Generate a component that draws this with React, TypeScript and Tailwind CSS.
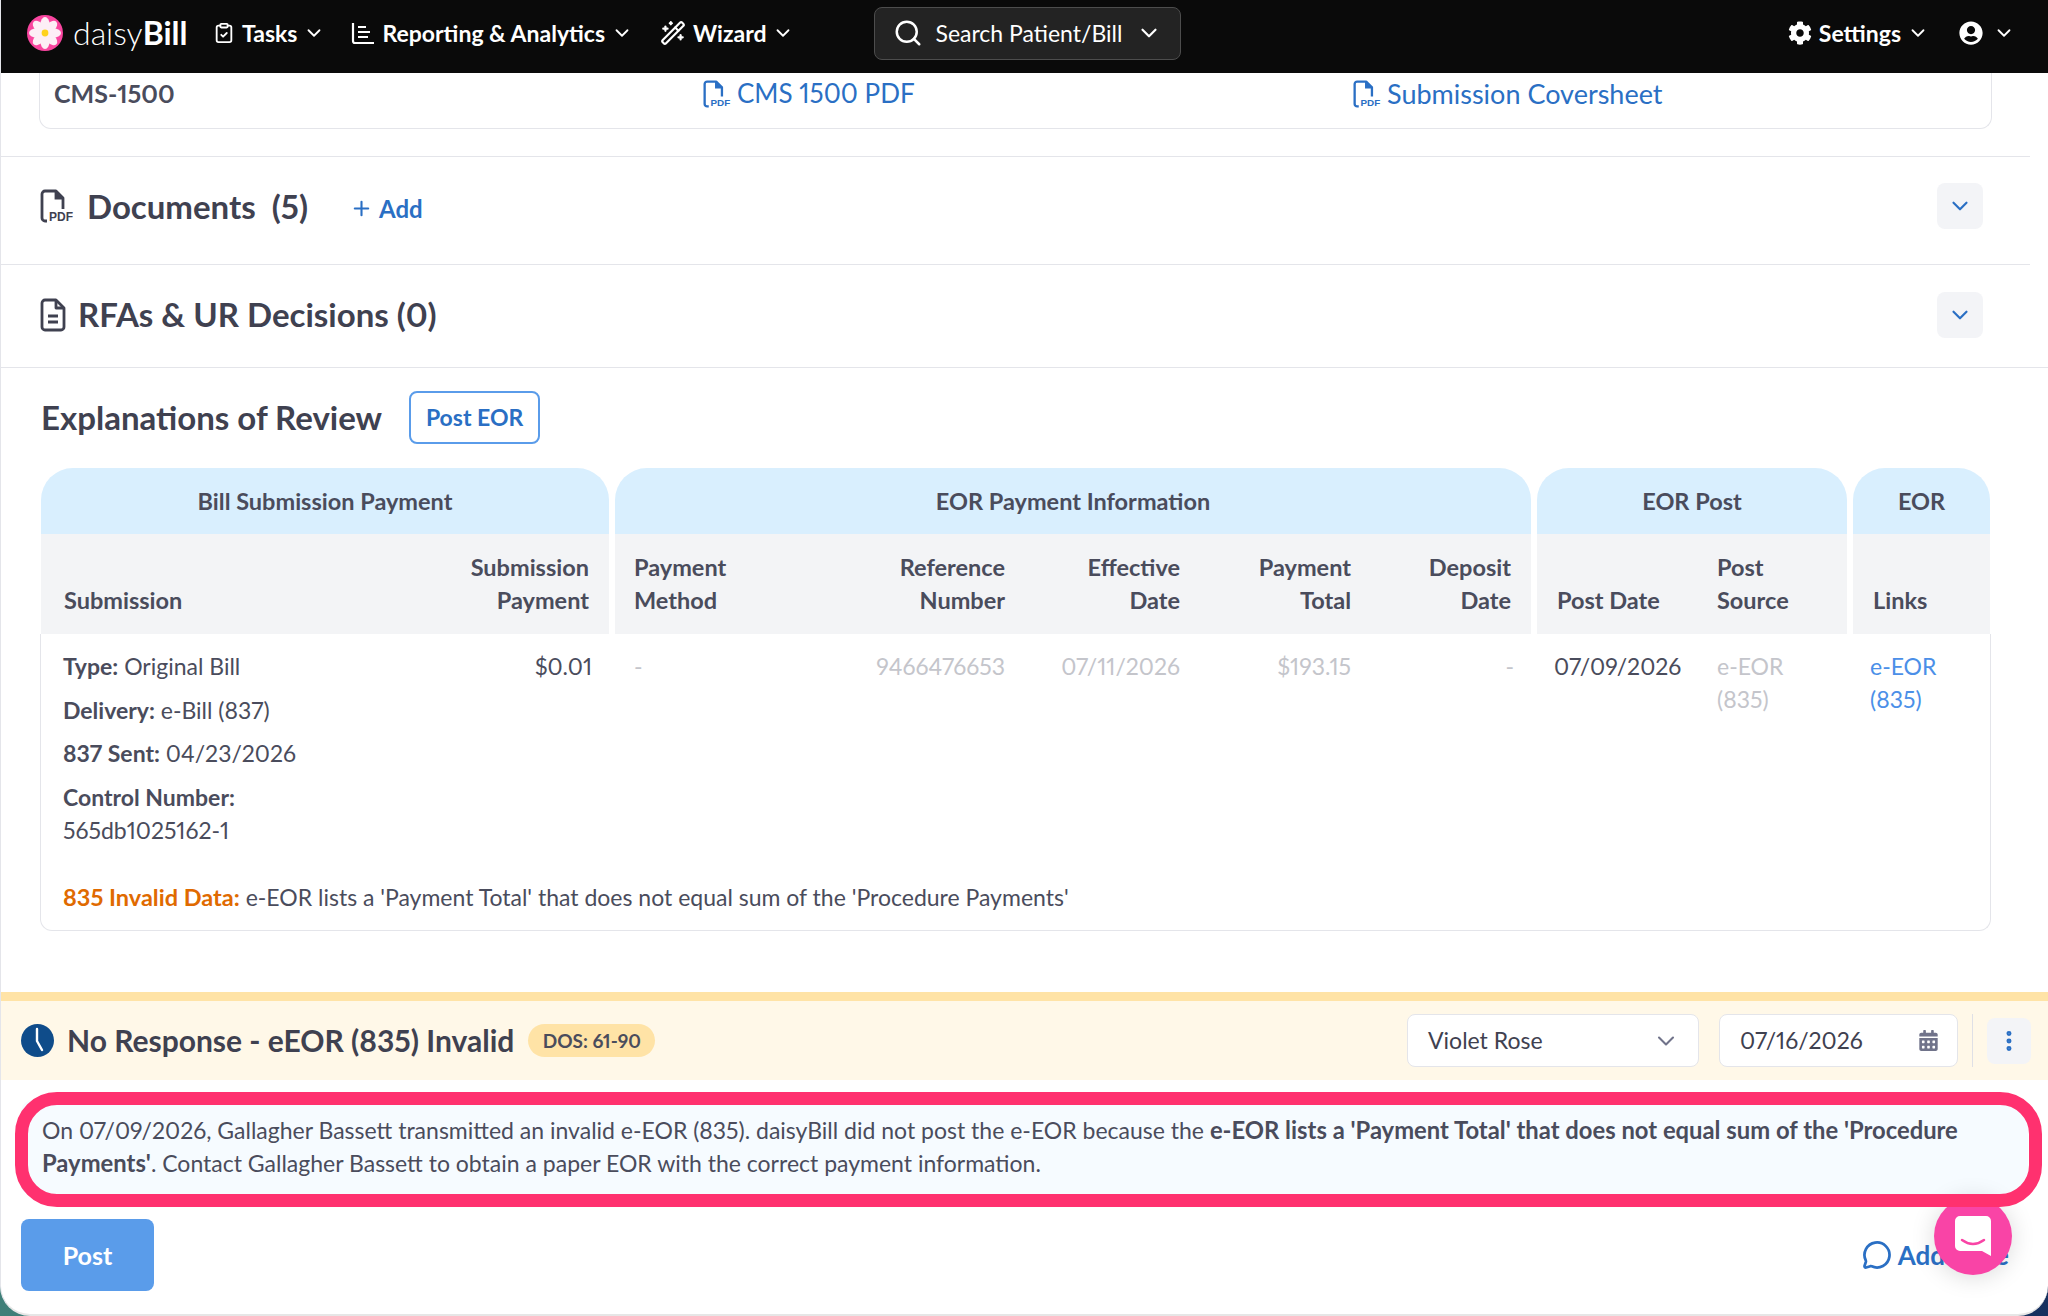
import React from "react";
import { ChevronDown, Search, ClipboardCheck, WandSparkles, Plus, MessageCircle, EllipsisVertical } from "lucide-react";
import { FaCog, FaUserCircle, FaCalendarAlt } from "react-icons/fa";

const Logo = () => (
  <svg width="36" height="36" viewBox="0 0 36 36">
    <circle cx="18" cy="18" r="18" fill="#f9459f" />
    {[0, 45, 90, 135, 180, 225, 270, 315].map((a) => (
      <ellipse key={a} cx="18" cy="9.5" rx="4.6" ry="7.5" fill="#fdeef6" transform={`rotate(${a} 18 18)`} />
    ))}
    <circle cx="18" cy="18" r="3.4" fill="#ffd21f" />
  </svg>
);

const PdfIcon = ({ color, size = 34 }: { color: string; size?: number }) => (
  <svg width={size} height={size} viewBox="0 0 34 34" fill="none" className="shrink-0">
    <path d="M7 32H5a3 3 0 0 1-3-3V5a3 3 0 0 1 3-3h11l7 7v11" stroke={color} strokeWidth="2.8" strokeLinejoin="round" />
    <path d="M16 2v7h7" stroke={color} strokeWidth="2.8" fill={color} />
    <text x="9" y="32" fontSize="12" fontWeight="700" fill={color} fontFamily="Liberation Sans, sans-serif" textLength="24" lengthAdjust="spacingAndGlyphs">PDF</text>
  </svg>
);

const DocIcon = () => (
  <svg width="26" height="34" viewBox="0 0 26 34" fill="none" stroke="#3f4150" strokeWidth="2.8" strokeLinejoin="round">
    <path d="M5 2h11l8 8v19a3 3 0 0 1-3 3H5a3 3 0 0 1-3-3V5a3 3 0 0 1 3-3z" />
    <path d="M16 2v8h8" />
    <path d="M8 18h10M8 24h10" />
  </svg>
);

const ReportIcon = () => (
  <svg width="24" height="24" viewBox="0 0 24 24" fill="none" stroke="#fff" strokeWidth="2.2">
    <path d="M2 2v18a2 2 0 0 0 2 2h19" />
    <path d="M7 6h8M7 11h12M7 16h10" />
  </svg>
);

const ClockIcon = () => (
  <svg width="33" height="33" viewBox="0 0 33 33">
    <circle cx="16.5" cy="16.5" r="16.5" fill="#0f4c8a" />
    <path d="M16 5v12l5 9" stroke="#fff" strokeWidth="2.4" fill="none" strokeLinecap="round" />
  </svg>
);

const NavItem = ({ icon, label, className }: { icon: React.ReactNode; label: string; className: string }) => (
  <div className={`flex items-center ${className}`}>
    {icon}
    <span className="ml-[7px] text-[23px] font-bold text-white">{label}</span>
    <ChevronDown size={22} strokeWidth={2} className="ml-[6px] text-white" />
  </div>
);

const Chevron = () => (
  <div className="w-[46px] h-[46px] rounded-lg bg-[#f3f4f7] flex items-center justify-center">
    <ChevronDown size={26} strokeWidth={2} className="text-[#2a6fc4]" />
  </div>
);

const g1 = "grid grid-cols-[358px_210px] w-[568px]";
const g2 = "grid grid-cols-[210px_200px_175px_171px_160px] w-[916px]";
const g3 = "grid grid-cols-[160px_150px] w-[310px]";
const g4 = "grid grid-cols-[137px] w-[137px]";

const Group = ({ label, w }: { label: string; w: string }) => (
  <div className={`${w} h-[66px] rounded-t-[32px] bg-[#d9effe] flex items-center justify-center text-[23.5px] font-bold text-[#4a4c5c]`}>
    {label}
  </div>
);

const Sub = ({ children, right }: { children: React.ReactNode; right?: boolean }) => (
  <div className={`h-[100px] flex items-end pb-[17px] px-5 leading-[33px] text-[23.5px] font-bold text-[#4a4c5c] ${right ? "justify-end text-right" : ""}`}>
    <span>{children}</span>
  </div>
);

const Kv = ({ k, v }: { k: string; v: string }) => (
  <p className="mb-[10.5px]"><b className="font-bold">{k}</b> {v}</p>
);

export default function App() {
  return (
    <div className="relative w-[2048px] h-[1316px] overflow-hidden bg-[linear-gradient(90deg,#3f7f78,#16305f)] text-[23px] leading-[33px] text-[#4a4c5c] proportional-nums font-['Lato','Liberation_Sans',sans-serif]">
      <div className="h-[1316px] bg-white rounded-b-[30px] border-l border-b-2 border-l-[#e4e5ea] border-b-[#e6e6e6] overflow-hidden">
        <header className="h-[73px] bg-[#0a0a0a] flex items-center pl-[26px] pr-[33px] pb-[7px]">
          <Logo />
          <div className="ml-[10px] text-[32px] leading-none text-white font-light w-[124px]">daisy<b className="font-bold">Bill</b></div>
          <NavItem className="ml-[16px]" icon={<ClipboardCheck size={22} strokeWidth={2} className="text-white" />} label="Tasks" />
          <NavItem className="ml-[26px]" icon={<ReportIcon />} label="Reporting & Analytics" />
          <NavItem className="ml-[27px]" icon={<WandSparkles size={26} strokeWidth={2} className="text-white" />} label="Wizard" />
          <div className="ml-[80px] w-[307px] h-[53px] rounded-lg border border-[#4d4d4d] bg-[#232323] flex items-center pl-[18px] pr-[18px]">
            <Search size={30} strokeWidth={2} className="text-white" />
            <span className="ml-[12px] text-white flex-1">Search Patient/Bill</span>
            <ChevronDown size={26} className="text-white" />
          </div>
          <div className="ml-auto flex items-center">
            <FaCog size={24} className="text-white" />
            <span className="ml-[7px] font-bold text-white">Settings</span>
            <ChevronDown size={22} className="ml-[6px] text-white" />
            <FaUserCircle size={24} className="ml-[30px] text-white" />
            <ChevronDown size={22} className="ml-[10px] text-white" />
          </div>
        </header>

        <div className="h-[56px] ml-[38px] w-[1953px] border border-t-0 border-[#e4e5ea] rounded-b-xl flex items-start pt-[4px] text-[#2a6fc4] text-[26px]">
          <span className="ml-[14px] w-[649px] text-[25px] font-bold text-[#4a4c5c]">CMS-1500</span>
          <a className="w-[650px] flex items-center gap-[6px]"><PdfIcon color="#2a6fc4" size={28} />CMS 1500 PDF</a>
          <a className="flex items-center gap-[6px] text-[27px]"><PdfIcon color="#2a6fc4" size={28} />Submission Coversheet</a>
        </div>

        <section className="mt-[27px] mr-[18px] h-[108px] border-t border-[#e4e5ea] flex items-center pb-[9px] pl-[39px] pr-[47px]">
          <PdfIcon color="#3f4150" size={34} />
          <h2 className="ml-[13px] text-[33px] font-bold text-[#3f4150]">Documents&nbsp; (5)</h2>
          <Plus size={23} strokeWidth={2.2} className="ml-[42px] mt-1 text-[#2a6fc4]" />
          <span className="ml-[6px] mt-1 font-bold text-[#2a6fc4] text-[24px]">Add</span>
          <div className="ml-auto"><Chevron /></div>
        </section>
        <section className="mr-[18px] h-[103px] border-t border-[#e4e5ea] flex items-center pb-[3px] pl-[39px] pr-[47px]">
          <DocIcon />
          <h2 className="ml-[12px] text-[33px] font-bold text-[#3f4150]">RFAs & UR Decisions (0)</h2>
          <div className="ml-auto"><Chevron /></div>
        </section>

        <div className="border-t border-[#e4e5ea] pl-[40px] pt-[23px]">
          <div className="flex items-center h-[53px]">
            <h2 className="text-[33px] font-bold text-[#3f4150]">Explanations of Review</h2>
            <button className="ml-[27px] w-[131px] h-[53px] rounded-lg border-2 border-[#5a9cea] text-[#2a6fc4] font-bold text-[23px]">Post EOR</button>
          </div>

          <div className="mt-[24px] w-[1950px]">
            <div className="flex gap-[6px]">
              <Group w="w-[568px]" label="Bill Submission Payment" />
              <Group w="w-[916px]" label="EOR Payment Information" />
              <Group w="w-[310px]" label="EOR Post" />
              <Group w="w-[137px]" label="EOR" />
            </div>
            <div className="flex gap-[6px] bg-white">
              <div className={`${g1} bg-[#f3f4f6]`}>
                <Sub><span className="ml-[3px]">Submission</span></Sub>
                <Sub right>Submission<br />Payment</Sub>
              </div>
              <div className={`${g2} bg-[#f3f4f6]`}>
                <Sub><span className="-ml-px block">Payment<br />Method</span></Sub>
                <Sub right>Reference<br />Number</Sub>
                <Sub right>Effective<br />Date</Sub>
                <Sub right>Payment<br />Total</Sub>
                <Sub right>Deposit<br />Date</Sub>
              </div>
              <div className={`${g3} bg-[#f3f4f6]`}>
                <Sub>Post Date</Sub>
                <Sub>Post<br />Source</Sub>
              </div>
              <div className={`${g4} bg-[#f3f4f6]`}>
                <Sub>Links</Sub>
              </div>
            </div>
            <div className="h-[297px] border border-t-0 border-[#e4e5ea] rounded-b-xl -ml-px pt-[16px]">
              <div className="flex gap-[6px] h-[231px]">
                <div className={g1}>
                  <div className="pl-[22px]">
                    <Kv k="Type:" v="Original Bill" />
                    <Kv k="Delivery:" v="e-Bill (837)" />
                    <Kv k="837 Sent:" v="04/23/2026" />
                    <p className="font-bold">Control Number:</p>
                    <p>565db1025162-1</p>
                  </div>
                  <div className="pr-[17px] text-right">$0.01</div>
                </div>
                <div className={`${g2} text-[#c4c5cb]`}>
                  <div className="pl-[19px]">-</div>
                  <div className="pr-5 text-right">9466476653</div>
                  <div className="pr-5 text-right">07/11/2026</div>
                  <div className="pr-5 text-right">$193.15</div>
                  <div className="pr-[17px] text-right">-</div>
                </div>
                <div className={g3}>
                  <div className="pl-[17px]">07/09/2026</div>
                  <div className="pl-5 text-[#c4c5cb]">e-EOR<br />(835)</div>
                </div>
                <div className={g4}>
                  <a className="block pl-[17px] text-[#4b8fe8]">e-EOR<br />(835)</a>
                </div>
              </div>
              <p className="pl-[22px]"><b className="font-bold text-[23.5px] text-[#e06a00]">835 Invalid Data:</b> e-EOR lists a 'Payment Total' that does not equal sum of the 'Procedure Payments'</p>
            </div>
          </div>
        </div>

        <div className="mt-[61px] h-[88px] border-t-[9px] border-[#ffe3a6] bg-[#fff8e8] flex items-center pl-[20px] pr-[17px]">
          <ClockIcon />
          <h2 className="ml-[13px] text-[30px] font-bold text-[#3f4150]">No Response - eEOR (835) Invalid</h2>
          <span className="ml-[14px] h-[33px] w-[127px] rounded-full bg-[#ffe3a6] flex items-center justify-center text-[19px] font-bold">DOS: 61-90</span>
          <div className="ml-auto w-[292px] h-[53px] rounded-lg border border-[#e4e5ea] bg-white flex items-center pl-5 pr-[18px] text-[#3f4150]">
            <span className="flex-1">Violet Rose</span>
            <ChevronDown size={28} strokeWidth={1.8} className="text-[#70738a]" />
          </div>
          <div className="ml-[20px] w-[239px] h-[53px] rounded-lg border border-[#e4e5ea] bg-white flex items-center pl-5 pr-[18px] text-[#3f4150]">
            <span className="flex-1">07/16/2026</span>
            <FaCalendarAlt size={21} className="text-[#70738a]" />
          </div>
          <div className="ml-[14px] w-px h-[53px] bg-[#dfe0e6]" />
          <div className="ml-[14px] w-[44px] h-[46px] rounded-lg bg-[#f3f4f7] flex items-center justify-center">
            <EllipsisVertical size={26} strokeWidth={2.6} className="text-[#2a6fc4]" />
          </div>
        </div>

        <div className="mt-[20px] mx-[20px] h-[95px] rounded-xl bg-[#f6fbff] border-b border-[#b9b8e0] pl-[21px] pt-[14px] whitespace-nowrap">
          On 07/09/2026, Gallagher Bassett transmitted an invalid e-EOR (835). daisyBill did not post the e-EOR because the <b className="font-bold text-[23.8px]">e-EOR lists a 'Payment Total' that does not equal sum of the 'Procedure</b><br /><b className="font-bold text-[23.8px]">Payments'</b>. Contact Gallagher Bassett to obtain a paper EOR with the correct payment information.
        </div>

        <div className="mt-[24px] pl-[20px] pr-[39px] flex items-center justify-between">
          <button className="w-[133px] h-[72px] rounded-lg bg-[#5a9cea] text-white font-bold text-[25px]">Post</button>
          <div className="flex items-center text-[#2a6fc4] font-bold text-[26px]">
            <MessageCircle size={30} strokeWidth={2.2} className="mr-[6px]" />Add Note
          </div>
        </div>
      </div>

      <div className="absolute left-[1934px] top-[1197px] w-[78px] h-[78px] rounded-full bg-[#f944a6] shadow-[0_2px_24px_rgba(0,0,0,0.15)] flex items-center justify-center">
        <svg width="36" height="40" viewBox="0 0 36 40">
          <path d="M5 0h26a5 5 0 0 1 5 5v35l-9-5H5a5 5 0 0 1-5-5V5a5 5 0 0 1 5-5z" fill="#fff" />
          <path d="M7 24q11 8 22 0" stroke="#f944a6" strokeWidth="2.5" fill="none" strokeLinecap="round" />
        </svg>
      </div>
      <div className="absolute left-[15px] top-[1092px] w-[2027px] h-[115px] rounded-[42px] border-[13px] border-[#ff316f]" />
    </div>
  );
}
